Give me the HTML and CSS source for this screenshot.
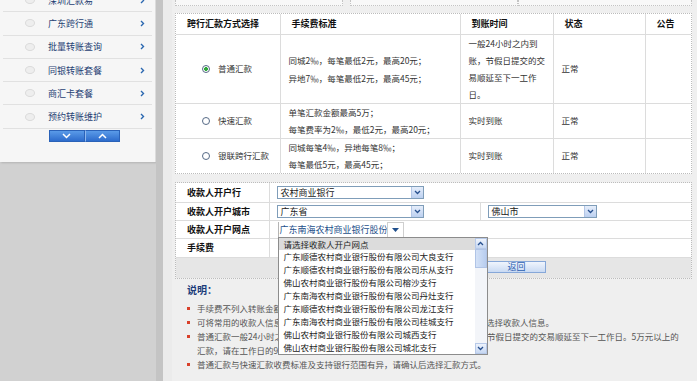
FILE: index.html
```html
<!DOCTYPE html>
<html lang="zh-CN">
<head>
    <meta charset="UTF-8" />
    <title>跨行汇款</title>
    <link rel="stylesheet" href="styles.css">
</head>
<body>
<div class="page">
    <div class="side">
        <div class="side-main">
            <div class="panel">
                <ul class="menu">
                    <li><span class="dot"></span><span class="lbl">深圳汇款易</span><svg class="arr" width="5" height="7" viewBox="0 0 5 7"><path d="M1 1l2.5 2.5L1 6" fill="none" stroke="#2a67b0" stroke-width="1.4"/></svg></li>
                    <li><span class="dot"></span><span class="lbl">广东跨行通</span><svg class="arr" width="5" height="7" viewBox="0 0 5 7"><path d="M1 1l2.5 2.5L1 6" fill="none" stroke="#2a67b0" stroke-width="1.4"/></svg></li>
                    <li><span class="dot"></span><span class="lbl">批量转账查询</span><svg class="arr" width="5" height="7" viewBox="0 0 5 7"><path d="M1 1l2.5 2.5L1 6" fill="none" stroke="#2a67b0" stroke-width="1.4"/></svg></li>
                    <li><span class="dot"></span><span class="lbl">同银转账套餐</span><svg class="arr" width="5" height="7" viewBox="0 0 5 7"><path d="M1 1l2.5 2.5L1 6" fill="none" stroke="#2a67b0" stroke-width="1.4"/></svg></li>
                    <li><span class="dot"></span><span class="lbl">商汇卡套餐</span><svg class="arr" width="5" height="7" viewBox="0 0 5 7"><path d="M1 1l2.5 2.5L1 6" fill="none" stroke="#2a67b0" stroke-width="1.4"/></svg></li>
                    <li><span class="dot"></span><span class="lbl">预约转账维护</span><svg class="arr" width="5" height="7" viewBox="0 0 5 7"><path d="M1 1l2.5 2.5L1 6" fill="none" stroke="#2a67b0" stroke-width="1.4"/></svg></li>
                </ul>
                <div class="pager">
                    <span class="pg"><svg width="9" height="6" viewBox="0 0 9 6"><path d="M1 1l3.5 3.5L8 1" fill="none" stroke="#fff" stroke-width="1.5"/></svg></span>
                    <span class="pg"><svg width="9" height="6" viewBox="0 0 9 6"><path d="M1 5l3.5-3.5L8 5" fill="none" stroke="#fff" stroke-width="1.5"/></svg></span>
                </div>
            </div>
        </div>
        <div class="side-bar"></div>
        <div class="side-gap"></div>
    </div>

    <div class="main">
        <div class="topstrip">
            <div class="tb tb1"></div>
            <div class="tb tb2"></div>
            <div class="tb tb3"></div>
        </div>

        <div class="box">
            <table class="fee">
                <colgroup>
                    <col style="width:104px"><col style="width:180px"><col style="width:93px"><col style="width:92px"><col>
                </colgroup>
                <tr class="head">
                    <th>跨行汇款方式选择</th>
                    <th>手续费标准</th>
                    <th>到账时间</th>
                    <th>状态</th>
                    <th>公告</th>
                </tr>
                <tr class="r1">
                    <td class="opt"><span class="radio on"></span>普通汇款</td>
                    <td class="tall">同城2‰，每笔最低2元，最高20元；<br>异地7‰，每笔最低2元，最高45元；</td>
                    <td class="time">一般24小时之内到<br>账，节假日提交的交<br>易顺延至下一工作<br>日。</td>
                    <td>正常</td>
                    <td></td>
                </tr>
                <tr class="r2">
                    <td class="opt"><span class="radio"></span>快速汇款</td>
                    <td>单笔汇款金额最高5万；<br>每笔费率为2‰，最低2元，最高20元；</td>
                    <td>实时到账</td>
                    <td>正常</td>
                    <td></td>
                </tr>
                <tr class="r3">
                    <td class="opt"><span class="radio"></span>银联跨行汇款</td>
                    <td>同城每笔4‰，异地每笔8‰；<br>每笔最低5元，最高45元；</td>
                    <td>实时到账</td>
                    <td>正常</td>
                    <td></td>
                </tr>
            </table>
        </div>

        <div class="box form">
            <table class="payee">
                <colgroup>
                    <col style="width:93px"><col style="width:211px"><col>
                </colgroup>
                <tr class="f1">
                    <th>收款人开户行</th>
                    <td colspan="2">
                        <div class="sel"><span class="sel-text">农村商业银行</span><span class="sel-btn"><svg width="7" height="5" viewBox="0 0 7 5"><path d="M1 1l2.5 2.5L6 1" fill="none" stroke="#27508f" stroke-width="1.3"/></svg></span></div>
                    </td>
                </tr>
                <tr class="f2">
                    <th>收款人开户城市</th>
                    <td class="split">
                        <div class="sel"><span class="sel-text">广东省</span><span class="sel-btn"><svg width="7" height="5" viewBox="0 0 7 5"><path d="M1 1l2.5 2.5L6 1" fill="none" stroke="#27508f" stroke-width="1.3"/></svg></span></div>
                    </td>
                    <td class="city">
                        <div class="sel short"><span class="sel-text">佛山市</span><span class="sel-btn"><svg width="7" height="5" viewBox="0 0 7 5"><path d="M1 1l2.5 2.5L6 1" fill="none" stroke="#27508f" stroke-width="1.3"/></svg></span></div>
                    </td>
                </tr>
                <tr class="f3">
                    <th>收款人开户网点</th>
                    <td colspan="2">
                        <div class="combo">
                            <span class="combo-text">广东南海农村商业银行股份</span>
                            <span class="combo-btn"><svg width="7" height="4" viewBox="0 0 7 4"><path d="M0 0h7L3.5 4z" fill="#1f4f8c"/></svg></span>
                            <div class="drop">
                                <ul>
                                    <li class="hl">请选择收款人开户网点</li>
                                    <li>广东顺德农村商业银行股份有限公司大良支行</li>
                                    <li>广东顺德农村商业银行股份有限公司乐从支行</li>
                                    <li>佛山农村商业银行股份有限公司榕沙支行</li>
                                    <li>广东南海农村商业银行股份有限公司丹灶支行</li>
                                    <li>广东顺德农村商业银行股份有限公司龙江支行</li>
                                    <li>广东南海农村商业银行股份有限公司桂城支行</li>
                                    <li>佛山农村商业银行股份有限公司城西支行</li>
                                    <li>佛山农村商业银行股份有限公司城北支行</li>
                                </ul>
                                <div class="sb">
                                    <span class="sb-btn"><svg width="7" height="5" viewBox="0 0 7 5"><path d="M1 4l2.5-2.5L6 4" fill="none" stroke="#27508f" stroke-width="1.3"/></svg></span>
                                    <span class="sb-thumb"></span>
                                    <span class="sb-track"></span>
                                    <span class="sb-btn"><svg width="7" height="5" viewBox="0 0 7 5"><path d="M1 1l2.5 2.5L6 1" fill="none" stroke="#27508f" stroke-width="1.3"/></svg></span>
                                </div>
                            </div>
                        </div>
                    </td>
                </tr>
                <tr class="f4">
                    <th>手续费</th>
                    <td colspan="2"></td>
                </tr>
            </table>
            <div class="foot"><span class="back">返回</span></div>
        </div>

        <div class="note">
            <h3>说明：</h3>
            <ul>
                <li>手续费不列入转账金额，将另行扣收。</li>
                <li>可将常用的收款人信息保存到收款人名册中，下次转账时便可直接从该名册中选择收款人信息。</li>
                <li>普通汇款一般24小时之内到账，快速汇款及银联跨行汇款一般均为实时到账，节假日提交的交易顺延至下一工作日。5万元以上的<br>汇款，请在工作日的9:00-16:00之间提交。</li>
                <li>普通汇款与快速汇款收费标准及支持银行范围有异，请确认后选择汇款方式。</li>
            </ul>
        </div>
    </div>
</div>
</body>
</html>
```

FILE: styles.css
```css
* {
    box-sizing: border-box;
}

body {
    margin: 0;
    font-family: "Noto Sans CJK SC", "Liberation Sans", sans-serif;
    font-size: 8.5px;
    color: #333;
    background: #efefef;
}

.page {
    display: flex;
    width: 697px;
    height: 381px;
    overflow: hidden;
}

/* left menu */
.side {
    display: flex;
    width: 172px;
    flex: none;
    background: #d1d1d1;
}

.side-main {
    width: 156px;
}

.panel {
    height: 162px;
    padding: 0 3px;
    background: #f6f6f6;
    border-right: 1px solid #dcdcdc;
    box-shadow: 1px 1px 2px rgba(0, 0, 0, 0.15);
    overflow: hidden;
}

.menu {
    list-style: none;
    margin: -11px 0 0;
    padding: 0;
}

.menu li {
    display: flex;
    align-items: center;
    height: 23.3px;
    border-bottom: 1px solid #e1e1e1;
    color: #1f3f73;
    font-size: 9px;
}

.dot {
    width: 10px;
    height: 8px;
    margin: 0 13px 0 22px;
    border: 1px solid #dadada;
    border-radius: 50%;
    background: #eeeeee;
}

.lbl {
    flex: 1;
}

.arr {
    margin-right: 7px;
}

.pager {
    display: flex;
    width: 71px;
    height: 12px;
    margin: 1px 0 0 46px;
}

.pg {
    flex: 1;
    display: flex;
    align-items: center;
    justify-content: center;
    background: linear-gradient(#5a9be8, #2d6ccc);
    border: 1px solid #2a62b8;
}

.pg + .pg {
    border-left: 1px solid #8fb8ee;
}

.side-bar {
    width: 7px;
    background: #c4c4c4;
}

.side-gap {
    width: 9px;
    background: #ebebeb;
}

/* main area */
.main {
    flex: 1;
    padding: 0 5px 0 3px;
}

.topstrip {
    display: flex;
    height: 6px;
}

.tb {
    border: 1px dotted #c4c4c4;
    border-top: none;
    background: #f8f8f8;
}

.tb1 {
    width: 168px;
    margin-right: 7px;
}

.tb2 {
    width: 168px;
}

.tb3 {
    flex: 1;
}

.box {
    margin-top: 7px;
    border: 1px dotted #bcbcbc;
    background: #fff;
}

table {
    width: 100%;
    border-collapse: collapse;
    table-layout: fixed;
}

.fee th,
.fee td {
    border-right: 1px solid #dcdcdc;
    border-bottom: 1px solid #dcdcdc;
    vertical-align: middle;
    text-align: left;
    padding: 0 0 0 8px;
    line-height: 17px;
}

.fee th:last-child,
.fee td:last-child {
    border-right: none;
}

.fee tr:last-child td {
    border-bottom: none;
}

.fee th {
    padding-left: 11px;
    font-size: 9px;
    color: #111;
    height: 20px;
}

.fee .r1 td {
    height: 69px;
}

.fee .r2 td {
    height: 35px;
}

.fee .r3 td {
    height: 35px;
}

.fee .tall {
    line-height: 18px;
}

.fee td.opt {
    padding-left: 26px;
    color: #333;
}

.radio {
    display: inline-block;
    width: 8px;
    height: 8px;
    margin-right: 8px;
    vertical-align: -1px;
    border: 1px solid #566a86;
    border-radius: 50%;
    background: #fff;
}

.radio.on {
    background: radial-gradient(circle, #2fa83a 0 1.6px, #fff 2.2px);
}

/* payee form */
.form {
    margin-top: 8px;
    background: #f4f4f4;
}

.payee th,
.payee td {
    border-bottom: 1px solid #dcdcdc;
    background: #fff;
    vertical-align: middle;
    padding: 0;
}

.payee th {
    padding-left: 11px;
    text-align: left;
    font-size: 9px;
    color: #111;
    border-right: 1px solid #dcdcdc;
}

.payee td {
    padding-left: 7px;
}

.payee td.split {
    border-right: 1px solid #dcdcdc;
}

.payee td.city {
    padding-left: 7px;
}

.f1 th {
    height: 19px;
}

.f2 th,
.f3 th {
    height: 18px;
}

.f4 th {
    height: 19px;
}

.sel {
    display: flex;
    width: 147px;
    height: 13px;
    border: 1px solid #7f9db9;
    background: #fff;
}

.sel.short {
    width: 109px;
}

.sel-text {
    flex: 1;
    padding-left: 3px;
    font-size: 9px;
    line-height: 11px;
    color: #222;
}

.sel-btn {
    width: 12px;
    display: flex;
    align-items: center;
    justify-content: center;
    background: linear-gradient(#e6eefb, #bcd0f0);
    border-left: 1px solid #b3c6e6;
}

.combo {
    position: relative;
    display: flex;
    width: 126px;
    height: 15px;
    margin-left: 1px;
    border-left: 1px solid #b5b5b5;
}

.combo-text {
    width: 108px;
    overflow: hidden;
    white-space: nowrap;
    padding-left: 1px;
    font-size: 9px;
    line-height: 15px;
    color: #1d4f8a;
}

.combo-btn {
    width: 17px;
    display: flex;
    align-items: center;
    justify-content: center;
    border: 1px solid #cfcfcf;
    border-bottom: none;
    background: #fff;
}

.drop {
    position: absolute;
    left: -1px;
    top: 15px;
    z-index: 5;
    display: flex;
    width: 210px;
    height: 118px;
    border: 1px solid #8c8c8c;
    background: #fff;
}

.drop ul {
    flex: 1;
    list-style: none;
    margin: 0;
    padding: 0;
    overflow: hidden;
}

.drop li {
    height: 12.9px;
    padding-left: 5px;
    line-height: 12.9px;
    white-space: nowrap;
    color: #222;
}

.drop li.hl {
    background: #dcdcdc;
}

.sb {
    width: 12px;
    display: flex;
    flex-direction: column;
    background: #f3f5f9;
}

.sb-btn {
    height: 11px;
    display: flex;
    align-items: center;
    justify-content: center;
    background: linear-gradient(#eef3fc, #c6d7f2);
    border: 1px solid #b7c9e8;
}

.sb-thumb {
    height: 19px;
    background: linear-gradient(90deg, #d4e2f7, #b8cdef);
    border: 1px solid #b0c4e6;
}

.sb-track {
    flex: 1;
}

.foot {
    height: 20px;
    padding: 3px 0 0 311px;
    background: #e6e6e6;
}

.back {
    display: block;
    width: 59px;
    height: 12px;
    border: 1px solid #86a7d8;
    background: linear-gradient(#f0f5fd, #c9daf3);
    text-align: center;
    font-size: 9px;
    line-height: 10px;
    color: #2c5fb0;
}

/* notes */
.note {
    padding-left: 12px;
}

.note h3 {
    margin: 4px 0 0;
    height: 14px;
    font-size: 10px;
    line-height: 14px;
    color: #1d3c7a;
}

.note ul {
    list-style: none;
    margin: 4px 0 0;
    padding: 0;
}

.note li {
    padding-left: 10px;
    line-height: 14px;
    white-space: nowrap;
    color: #555;
    background: linear-gradient(#d9402a, #d9402a) no-repeat 0 6px / 3px 3px;
}
```
